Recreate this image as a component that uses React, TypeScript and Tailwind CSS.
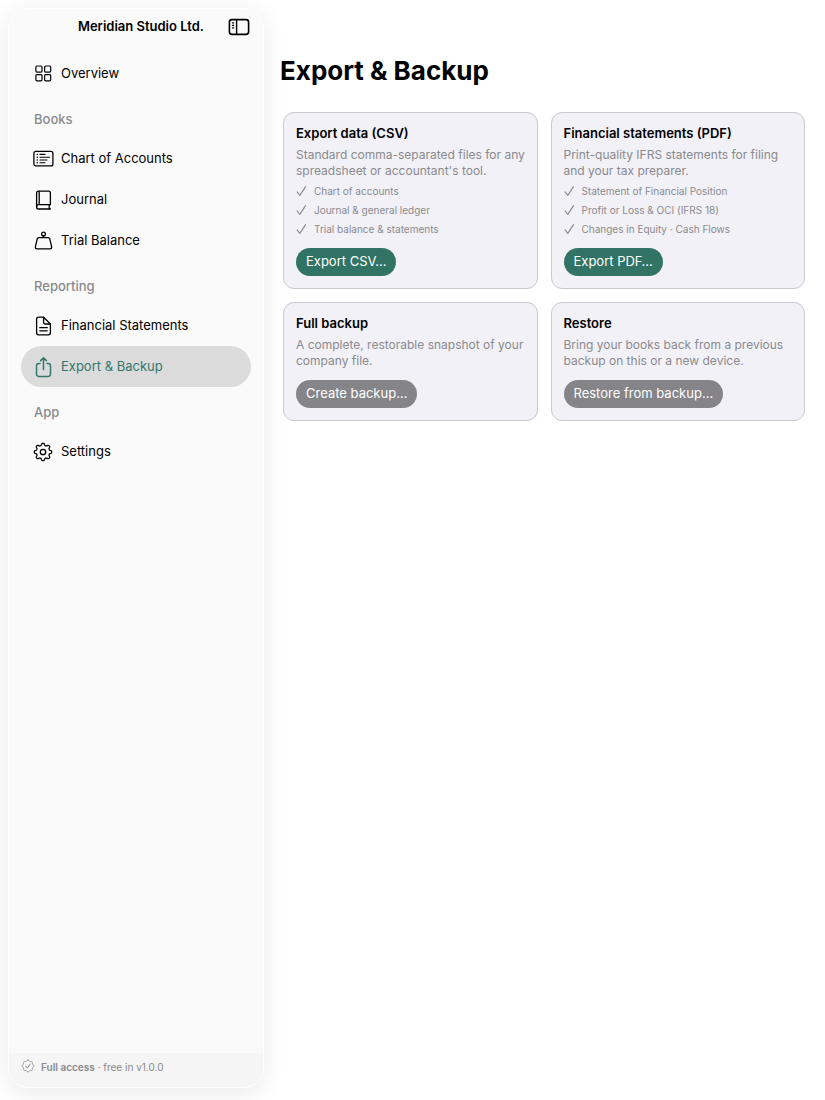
import React from 'react';

type IconProps = { className?: string };

// Closed outline with evenly spaced lobes, used for the gear and the seal
function lobedPath(lobes: number, radius: number, depth: number, sharpness: number) {
  const steps = 160;
  const points: string[] = [];
  for (let i = 0; i < steps; i++) {
    const a = (i / steps) * Math.PI * 2;
    const wave = Math.tanh(sharpness * Math.cos(lobes * a)) / Math.tanh(sharpness);
    const r = radius + depth * wave;
    points.push(`${(11 + r * Math.sin(a)).toFixed(2)} ${(11 - r * Math.cos(a)).toFixed(2)}`);
  }
  return `M${points.join('L')}Z`;
}

const GEAR_PATH = lobedPath(8, 7.7, 1, 1.6);
const SEAL_PATH = lobedPath(8, 8.5, 0.7, 0.6);

function Icon({ children, className = 'h-[22px] w-[22px]' }: IconProps & { children: React.ReactNode }) {
  return (
    <svg
      viewBox="0 0 22 22"
      fill="none"
      stroke="currentColor"
      strokeWidth={1.3}
      strokeLinecap="round"
      strokeLinejoin="round"
      aria-hidden="true"
      className={`shrink-0 ${className}`}
    >
      {children}
    </svg>
  );
}

function GridIcon() {
  return (
    <Icon>
      <rect x="3.9" y="3" width="6.1" height="6.1" rx="1" strokeWidth={1.2} />
      <rect x="12.6" y="3" width="6.1" height="6.1" rx="1" strokeWidth={1.2} />
      <rect x="3.9" y="11.7" width="6.1" height="6.1" rx="1" strokeWidth={1.2} />
      <rect x="12.6" y="11.7" width="6.1" height="6.1" rx="1" strokeWidth={1.2} />
    </Icon>
  );
}

function ListIcon() {
  return (
    <Icon>
      <rect x="1.9" y="3.3" width="19" height="14.6" rx="2" />
      <path d="M8 6.4h5M8 9.2h9.6M8 12h7M8 14.8h5" strokeWidth={1.1} />
      <path d="M5.2 6.4h.1M5.2 9.2h.1M5.2 12h.1M5.2 14.8h.1" strokeWidth={1.4} />
    </Icon>
  );
}

function BookIcon() {
  return (
    <Icon>
      <path d="M18.4 15.6V3.9c0-1-.6-1.7-1.7-1.7H6.4c-1.1 0-1.8.7-1.8 1.8v14c0 1.200.8 2 2 2h11.8" />
      <path d="M4.6 17.8c0-1.4.8-2.2 2-2.2h11.8M7.200 2.4v13.2M17.200 15.8v4" />
    </Icon>
  );
}

function WeightIcon() {
  return (
    <Icon>
      <circle cx="11.5" cy="4" r="1.9" />
      <path d="M11.5 6v1.6M6.8 7.6h9.4c.8 0 1.3.4 1.5 1.1l1.9 8c.3 1.3-.4 2.1-1.6 2.1H5c-1.2 0-1.9-.8-1.600-2.100l1.900-8c.2-.7.7-1.100 1.500-1.100Z" />
    </Icon>
  );
}

function DocIcon() {
  return (
    <Icon>
      <path d="M11.6 2.2H6.6c-1.3 0-2 .7-2 2v13.600c0 1.300.7 2 2 2h9.800c1.300 0 2-.7 2-2V9l-6.800-6.800Z" />
      <path d="M11.600 2.400v5.200c0 .9.5 1.400 1.400 1.400h5.200M7.800 12.700h7.400M7.800 15.800h7.400" />
    </Icon>
  );
}

function ShareIcon() {
  return (
    <Icon>
      <path d="M8 7.600H6.800c-1.500 0-2.300.8-2.300 2.300v8.200c0 1.500.8 2.300 2.300 2.300h9.400c1.500 0 2.300-.8 2.300-2.300V9.900c0-1.500-.8-2.300-2.300-2.300H15" strokeWidth={1.5} />
      <path d="M11.500 13.400V1.900M8.600 4.600l2.900-2.900 2.900 2.900" strokeWidth={1.5} />
    </Icon>
  );
}

function GearIcon() {
  return (
    <Icon>
      <path d={GEAR_PATH} />
      <circle cx="11" cy="11" r="2.7" />
    </Icon>
  );
}

function SidebarIcon() {
  return (
    <Icon>
      <rect x="1.4" y="3.6" width="19.2" height="14.8" rx="2.6" strokeWidth={1.6} />
      <path d="M8.6 3.8v14.4" strokeWidth={1.4} />
      <path d="M4.4 6.9h1.3M4.4 9.4h1.3M4.4 11.9h1.3" strokeWidth={1.1} />
    </Icon>
  );
}

function SealIcon() {
  return (
    <Icon className="h-3.5 w-3.5">
      <path d={SEAL_PATH} strokeWidth={1.4} />
      <path d="m7.6 11.5 2.5 2.9 4.3-6.6" strokeWidth={1.5} />
    </Icon>
  );
}

function CheckIcon() {
  return (
    <Icon className="h-3 w-3">
      <path d="m2 12.500 5 6.500L17.500 3" strokeWidth={2} />
    </Icon>
  );
}

const NAV = [
  { title: null, items: [{ name: 'Overview', icon: GridIcon }] },
  {
    title: 'Books',
    items: [
      { name: 'Chart of Accounts', icon: ListIcon },
      { name: 'Journal', icon: BookIcon },
      { name: 'Trial Balance', icon: WeightIcon },
    ],
  },
  {
    title: 'Reporting',
    items: [
      { name: 'Financial Statements', icon: DocIcon },
      { name: 'Export & Backup', icon: ShareIcon },
    ],
  },
  { title: 'App', items: [{ name: 'Settings', icon: GearIcon }] },
];

const CARDS = [
  {
    title: 'Export data (CSV)',
    text: "Standard comma-separated files for any spreadsheet or accountant's tool.",
    points: ['Chart of accounts', 'Journal & general ledger', 'Trial balance & statements'],
    action: 'Export CSV…',
    primary: true,
  },
  {
    title: 'Financial statements (PDF)',
    text: 'Print-quality IFRS statements for filing and your tax preparer.',
    points: ['Statement of Financial Position', 'Profit or Loss & OCI (IFRS 18)', 'Changes in Equity · Cash Flows'],
    action: 'Export PDF…',
    primary: true,
  },
  {
    title: 'Full backup',
    text: 'A complete, restorable snapshot of your company file.',
    points: [],
    action: 'Create backup…',
    primary: false,
  },
  {
    title: 'Restore',
    text: 'Bring your books back from a previous backup on this or a new device.',
    points: [],
    action: 'Restore from backup…',
    primary: false,
  },
];

function Sidebar({ active }: { active: string }) {
  return (
    <aside className="flex w-64 shrink-0 flex-col overflow-hidden rounded-[20px] border border-white bg-[#fafafa] shadow-[0_4px_24px_rgba(0,0,0,0.09)]">
      <header className="flex h-9 items-center justify-end gap-6 pr-[13px]">
        <span className="text-[13px] font-semibold">Meridian Studio Ltd.</span>
        <button type="button" aria-label="Toggle sidebar">
          <SidebarIcon />
        </button>
      </header>

      <nav className="mt-2 flex-1 px-3">
        {NAV.map((section, i) => (
          <section key={i}>
            {section.title && (
              <h2 className="h-11 px-[13px] pt-[15px] text-[13px] leading-5 font-medium text-[#8a8a8e]">
                {section.title}
              </h2>
            )}
            {section.items.map(({ name, icon: NavIcon }) => (
              <a
                key={name}
                href="#"
                aria-current={name === active ? 'page' : undefined}
                className={`flex h-[41px] items-center gap-[7px] rounded-full px-[11px] text-[13px] ${
                  name === active ? 'bg-[#dbdbdb] text-[#32786a]' : 'text-black'
                }`}
              >
                <NavIcon />
                {name}
              </a>
            ))}
          </section>
        ))}
      </nav>

      <footer className="flex h-[34px] items-start gap-1.5 bg-[#f4f5f4] px-3 pt-1.5 text-[10px] leading-4 text-[#8a8a8e]">
        <SealIcon />
        <span>
          <strong className="font-semibold">Full access</strong> · free in v1.0.0
        </span>
      </footer>
    </aside>
  );
}

function Card({ title, text, points, action, primary }: (typeof CARDS)[number]) {
  return (
    <article className="rounded-[11px] border border-[#c9c9ce] bg-[#f2f1f7] py-3 pr-1.5 pl-3">
      <h2 className="text-[13px] leading-4 font-semibold">{title}</h2>
      <p className="mt-1.5 text-[12px] leading-4 text-[#8a8a8e]">{text}</p>
      {points.length > 0 && (
        <ul className="mt-1 flex flex-col gap-[3px] text-[10px] leading-4 text-[#8a8a8e]">
          {points.map((point) => (
            <li key={point} className="flex items-center gap-1.5">
              <CheckIcon />
              {point}
            </li>
          ))}
        </ul>
      )}
      <button
        type="button"
        className={`mt-[11px] block h-7 rounded-full px-2.5 text-[13px] text-white ${
          primary ? 'bg-[#317365]' : 'bg-[#858489]'
        }`}
      >
        {action}
      </button>
    </article>
  );
}

export default function App() {
  return (
    <div className="flex min-h-screen bg-white px-2 pt-2 pb-3 font-['Inter',sans-serif] text-black">
      <Sidebar active="Export & Backup" />

      <main className="min-w-0 flex-1 pt-[45px] pr-3">
        <h1 className="pl-4 text-[26px] leading-9 font-bold">Export &amp; Backup</h1>
        <div className="mt-[23px] grid grid-cols-2 gap-[13px] pl-[19px]">
          {CARDS.map((card) => (
            <Card key={card.title} {...card} />
          ))}
        </div>
      </main>
    </div>
  );
}
